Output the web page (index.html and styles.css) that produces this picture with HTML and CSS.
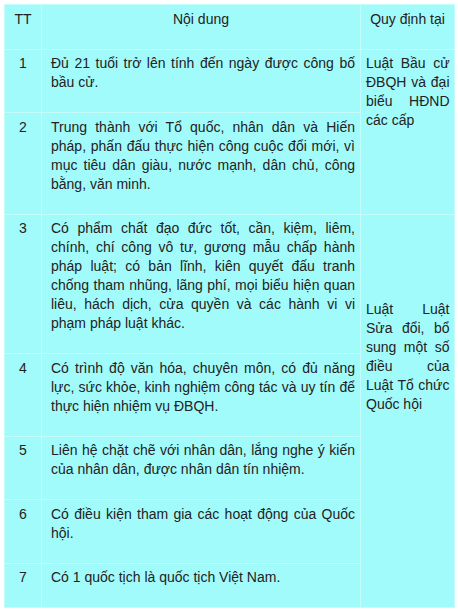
FILE: index.html
```html
<!DOCTYPE html>
<html lang="vi">
<head>
<meta charset="utf-8">
<title>Tiêu chuẩn ĐBQH</title>
<link rel="stylesheet" href="styles.css">
</head>
<body>
<table class="tbl">
  <colgroup>
    <col class="c1">
    <col class="c2">
    <col class="c3">
  </colgroup>
  <tr>
    <th class="num">TT</th>
    <th class="head">Nội dung</th>
    <th class="head">Quy định tại</th>
  </tr>
  <tr>
    <td class="num">1</td>
    <td class="txt">Đủ 21 tuổi trở lên tính đến ngày được công bố bầu cử.</td>
    <td class="law" rowspan="2">Luật Bầu cử ĐBQH và đại biểu HĐND các cấp</td>
  </tr>
  <tr>
    <td class="num">2</td>
    <td class="txt">Trung thành với Tổ quốc, nhân dân và Hiến pháp, phấn đấu thực hiện công cuộc đổi mới, vì mục tiêu dân giàu, nước mạnh, dân chủ, công bằng, văn minh.</td>
  </tr>
  <tr>
    <td class="num">3</td>
    <td class="txt">Có phẩm chất đạo đức tốt, cần, kiệm, liêm, chính, chí công vô tư, gương mẫu chấp hành pháp luật; có bản lĩnh, kiên quyết đấu tranh chống tham nhũng, lãng phí, mọi biểu hiện quan liêu, hách dịch, cửa quyền và các hành vi vi phạm pháp luật khác.</td>
    <td class="law law-low" rowspan="5">Luật Luật Sửa đổi, bổ sung một số điều của Luật Tổ chức Quốc hội</td>
  </tr>
  <tr>
    <td class="num">4</td>
    <td class="txt">Có trình độ văn hóa, chuyên môn, có đủ năng lực, sức khỏe, kinh nghiệm công tác và uy tín để thực hiện nhiệm vụ ĐBQH.</td>
  </tr>
  <tr>
    <td class="num">5</td>
    <td class="txt">Liên hệ chặt chẽ với nhân dân, lắng nghe ý kiến của nhân dân, được nhân dân tín nhiệm.</td>
  </tr>
  <tr>
    <td class="num">6</td>
    <td class="txt">Có điều kiện tham gia các hoạt động của Quốc hội.</td>
  </tr>
  <tr>
    <td class="num">7</td>
    <td class="txt">Có 1 quốc tịch là quốc tịch Việt Nam.</td>
  </tr>
</table>
</body>
</html>
```
FILE: styles.css
```css
html, body {
  margin: 0;
  padding: 0;
  background: #ffffff;
}
body {
  padding: 4px;
  font-family: "Liberation Sans", Arial, sans-serif;
  font-size: 14px;
  line-height: 19px;
  color: #222222;
}
.tbl {
  width: 450px;
  border-collapse: collapse;
  table-layout: fixed;
  background: #a2fbfb;
}
.c1 { width: 37px; }
.c2 { width: 319px; }
.c3 { width: 94px; }
.tbl th, .tbl td {
  border: 1px solid #c4fcfc;
  padding: 4.5px 5px 20px 5px;
  vertical-align: top;
  font-weight: normal;
}
.tbl .num {
  text-align: center;
  padding-left: 2px;
  padding-right: 2px;
}
.tbl .head {
  text-align: center;
}
.tbl .txt {
  text-align: justify;
  padding-left: 9px;
  padding-right: 5px;
}
.tbl .law {
  text-align: justify;
  padding-left: 5px;
  padding-right: 4.5px;
}
.tbl .law-low {
  padding-top: 85px;
}
```
